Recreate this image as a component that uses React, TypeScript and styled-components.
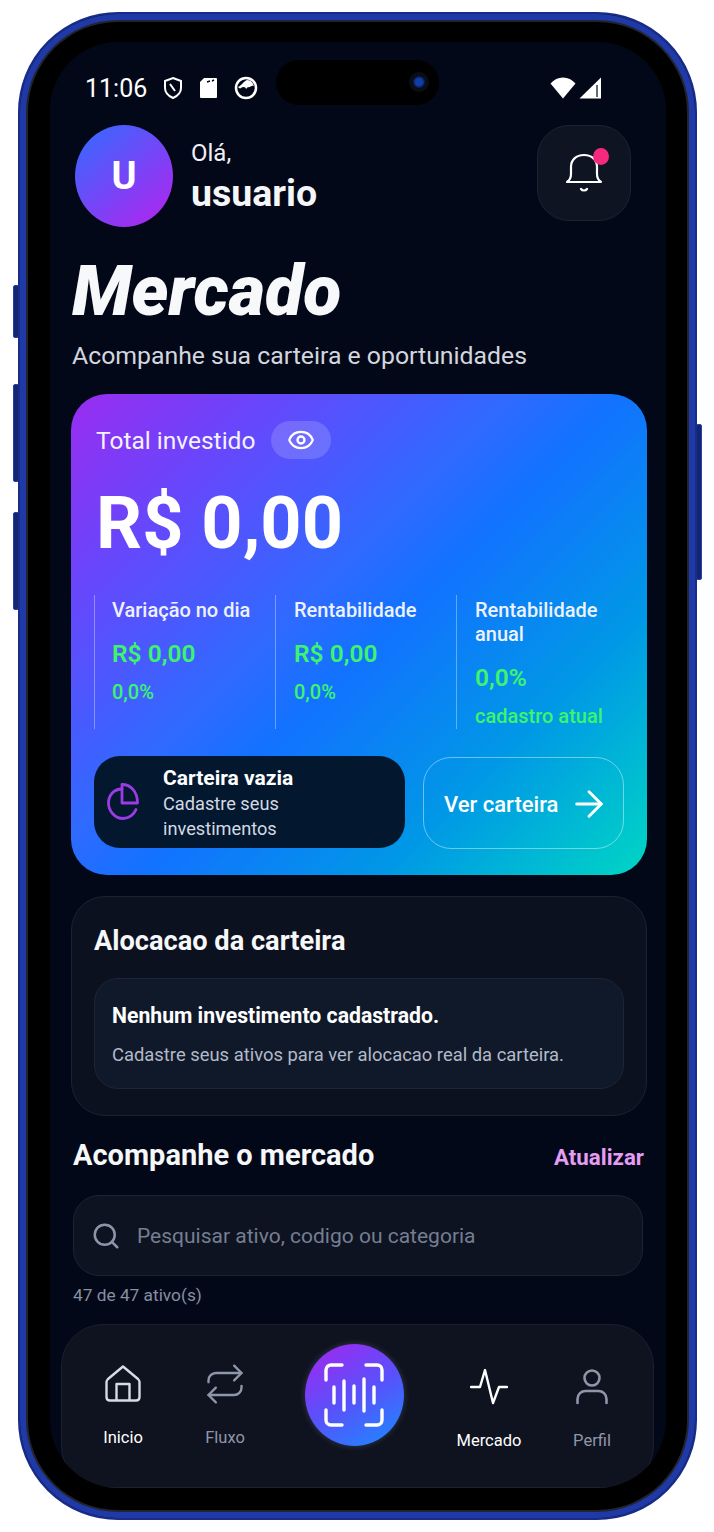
import React from "react";
import styled, { createGlobalStyle } from "styled-components";
import { ArrowRight, Eye, Repeat, Search } from "lucide-react";

const GlobalStyle = createGlobalStyle`
  html, body {
    margin: 0;
    background: #ffffff;
  }
  * {
    box-sizing: border-box;
  }
`;

const App = () => {
  return (
    <Stage>
      <GlobalStyle />
      <SideKey $side="left" $top={285} $height={53} />
      <SideKey $side="left" $top={384} $height={98} />
      <SideKey $side="left" $top={512} $height={98} />
      <SideKey $side="right" $top={424} $height={156} />
      <Frame>
        <Screen>
          <Island>
            <Lens />
          </Island>

          <StatusBar>
            <Time>11:06</Time>
            <StatusIcons>
              <svg width="20" height="24" viewBox="0 0 20 24" fill="none" stroke="#fff" strokeWidth="2">
                <path d="M10 2l8 3v7c0 5-3.500 8-8 10-4.500-2-8-5-8-10V5z" />
                <path d="M7 8l5 7" />
              </svg>
              <svg width="19" height="24" viewBox="0 0 19 24">
                <path d="M5 2h12a1 1 0 0 1 1 1v18a1 1 0 0 1-1 1H2a1 1 0 0 1-1-1V6z" fill="#fff" />
                <path d="M8 6l3-1M13 5l2-1" stroke="#030818" strokeWidth="1.500" />
              </svg>
              <svg width="24" height="24" viewBox="0 0 24 24">
                <circle cx="12" cy="12" r="10" fill="none" stroke="#fff" strokeWidth="2.500" />
                <path d="M4 11c3-1 5-5 9-7 4 0 6 3 7 6-3-1-4 2-6 1l-2 2c0-2-3-3-5-1-1 1-2 0-3-1z" fill="#fff" />
              </svg>
            </StatusIcons>
            <Signal>
              <svg width="26" height="22" viewBox="0 0 26 22">
                <path d="M0.500 6.500C4 2.500 8 0.500 13 0.500s9 2 12.500 6L13 21.500z" fill="#fff" />
              </svg>
              <svg width="23" height="22" viewBox="0 0 23 22">
                <path d="M22 0.500V21.500H0.500z" fill="#fff" />
                <path d="M18 8v12" stroke="#030818" strokeWidth="1.200" />
              </svg>
            </Signal>
          </StatusBar>

          <Header>
            <Avatar>U</Avatar>
            <Greeting>
              <Hello>Olá,</Hello>
              <UserName>usuario</UserName>
            </Greeting>
            <BellButton>
              <svg width="38" height="42" viewBox="0 0 38 42" fill="none" stroke="#fff" strokeWidth="2.200" strokeLinecap="round" strokeLinejoin="round">
                <path d="M2 30c3-2 4-4 4-8v-7C6 8 11 3 19 3s13 5 13 12v7c0 4 1 6 4 8z" />
                <path d="M16 37c1.500 2 4.500 2 6 0" />
              </svg>
              <BellDot />
            </BellButton>
          </Header>

          <PageTitle>Mercado</PageTitle>
          <Subtitle>Acompanhe sua carteira e oportunidades</Subtitle>

          <BalanceCard>
            <BalanceTop>
              <BalanceLabel>Total investido</BalanceLabel>
              <EyePill>
                <Eye size={28} strokeWidth={2} color="#fff" />
              </EyePill>
            </BalanceTop>
            <Amount>R$ 0,00</Amount>

            <Stats>
              <Stat>
                <StatLabel>Variação no dia</StatLabel>
                <StatValue>R$ 0,00</StatValue>
                <StatNote>0,0%</StatNote>
              </Stat>
              <Stat>
                <StatLabel>Rentabilidade</StatLabel>
                <StatValue>R$ 0,00</StatValue>
                <StatNote>0,0%</StatNote>
              </Stat>
              <Stat>
                <StatLabel>Rentabilidade anual</StatLabel>
                <StatValue>0,0%</StatValue>
                <StatNote>cadastro atual</StatNote>
              </Stat>
            </Stats>

            <CardActions>
              <EmptyBox>
                <svg width="32" height="38" viewBox="0 0 32 38" fill="none" stroke="#9a3be6" strokeWidth="2.800" strokeLinejoin="round" strokeLinecap="round">
                  <path d="M15 6C7 6 1.500 12 1.500 20S8 35.500 16 35.500c6 0 11-4 13-9" />
                  <path d="M15 1.500c8.500 0 15.500 7 15.500 18.500H15z" />
                </svg>
                <EmptyText>
                  <EmptyTitle>Carteira vazia</EmptyTitle>
                  <EmptySub>Cadastre seus investimentos</EmptySub>
                </EmptyText>
              </EmptyBox>
              <SeeButton>
                Ver carteira
                <ArrowRight size={42} strokeWidth={1.700} color="#fff" />
              </SeeButton>
            </CardActions>
          </BalanceCard>

          <AllocCard>
            <AllocTitle>Alocacao da carteira</AllocTitle>
            <AllocEmpty>
              <AllocEmptyTitle>Nenhum investimento cadastrado.</AllocEmptyTitle>
              <AllocEmptySub>Cadastre seus ativos para ver alocacao real da carteira.</AllocEmptySub>
            </AllocEmpty>
          </AllocCard>

          <SectionHead>
            <SectionTitle>Acompanhe o mercado</SectionTitle>
            <RefreshLink>Atualizar</RefreshLink>
          </SectionHead>

          <SearchBox>
            <Search size={30} strokeWidth={2} color="#8d95a8" />
            <SearchText>Pesquisar ativo, codigo ou categoria</SearchText>
          </SearchBox>
          <CountText>47 de 47 ativo(s)</CountText>

          <BottomNav>
            <NavItem>
              <NavIcon>
                <svg width="36" height="38" viewBox="0 0 36 38" fill="none" stroke="#d8dbe4" strokeWidth="2.400" strokeLinejoin="round">
                  <path d="M18 1.500L33 14c1 1 1.500 2 1.500 3v15c0 2-1.500 3.500-3.500 3.500H5c-2 0-3.500-1.500-3.500-3.500V17c0-1 .5-2 1.500-3z" />
                  <path d="M11.500 35.500V19h13v16.500" />
                </svg>
              </NavIcon>
              <NavLabel $active>Inicio</NavLabel>
            </NavItem>
            <NavItem>
              <NavIcon>
                <Repeat size={44} strokeWidth={1.300} color="#8f96aa" />
              </NavIcon>
              <NavLabel>Fluxo</NavLabel>
            </NavItem>
            <ScanCell>
              <ScanButton>
                <svg width="60" height="64" viewBox="0 0 60 64" fill="none" stroke="#fff" strokeWidth="3.400" strokeLinecap="round" strokeLinejoin="round">
                  <path d="M18 2H7a5 5 0 0 0-5 5v10" />
                  <path d="M42 2h11a5 5 0 0 1 5 5v10" />
                  <path d="M18 62H7a5 5 0 0 1-5-5V47" />
                  <path d="M42 62h11a5 5 0 0 0 5-5V47" />
                  <path d="M10 24v16M20 18v29M30 23v17M40 16v32M50 24v16" />
                </svg>
              </ScanButton>
            </ScanCell>
            <NavItem $low>
              <NavIcon>
                <svg width="38" height="36" viewBox="0 0 38 36" fill="none" stroke="#fff" strokeWidth="2.400" strokeLinecap="round" strokeLinejoin="round">
                  <path d="M1 18h9l5-17 8 33 6-16h8" />
                </svg>
              </NavIcon>
              <NavLabel $active>Mercado</NavLabel>
            </NavItem>
            <NavItem $low>
              <NavIcon>
                <svg width="32" height="36" viewBox="0 0 32 36" fill="none" stroke="#8f96aa" strokeWidth="2.600" strokeLinecap="round">
                  <circle cx="16" cy="9" r="7.500" />
                  <path d="M1.500 34v-4c0-5 4-8 8-8h13c4 0 8 3 8 8v4" />
                </svg>
              </NavIcon>
              <NavLabel>Perfil</NavLabel>
            </NavItem>
          </BottomNav>
        </Screen>
      </Frame>
    </Stage>
  );
};

const Stage = styled.div`
  position: relative;
  width: 714px;
  height: 1532px;
  padding: 12px 17px 12px 18px;
  font-family: Roboto, "Liberation Sans", sans-serif;
  color: #ffffff;
`;

const SideKey = styled.div<{ $side: "left" | "right"; $top: number; $height: number }>`
  position: absolute;
  top: ${(p) => p.$top}px;
  ${(p) => (p.$side === "left" ? "left: 13px;" : "left: 696px;")}
  width: 6px;
  height: ${(p) => p.$height}px;
  border-radius: 2px;
  background: #14266f;
  border: 1px solid #2340ae;
`;

const Frame = styled.div`
  position: relative;
  height: 1508px;
  padding: 28px 29px 30px 30px;
  border-radius: 100px;
  background: #000000;
  border: 2px solid #182c88;
  box-shadow: inset 0 0 0 6px #1f3aa8, inset 0 0 0 8px #23252e;
`;

const Screen = styled.div`
  position: relative;
  display: flex;
  flex-direction: column;
  height: 1446px;
  padding: 32px 19px 0 22px;
  border-radius: 68px;
  overflow: hidden;
  background: #030818;
`;

const Island = styled.div`
  position: absolute;
  top: 18px;
  left: 226px;
  width: 163px;
  height: 45px;
  border-radius: 23px;
  background: #000000;
`;

const Lens = styled.div`
  position: absolute;
  top: 12px;
  right: 10px;
  width: 20px;
  height: 20px;
  border-radius: 50%;
  background: radial-gradient(circle, #0f3ea8 0 25%, #0a0d18 45%);
`;

const StatusBar = styled.div`
  display: flex;
  align-items: center;
  height: 28px;
  padding: 0 0 0 13px;
`;

const Time = styled.div`
  font-size: 25px;
`;

const StatusIcons = styled.div`
  display: flex;
  align-items: center;
  gap: 16px;
  margin-left: 16px;
`;

const Signal = styled.div`
  display: flex;
  align-items: center;
  gap: 3px;
  margin-left: auto;
  padding-right: 45px;
`;

const Header = styled.div`
  display: flex;
  align-items: flex-start;
  margin-top: 23px;
  padding: 0 16px 0 3px;
`;

const Avatar = styled.div`
  display: flex;
  align-items: center;
  justify-content: center;
  width: 98px;
  height: 102px;
  border-radius: 50%;
  background: linear-gradient(140deg, #3b66ff 8%, #a22df0 85%);
  font-size: 38px;
  font-weight: 700;
`;

const Greeting = styled.div`
  margin: 12px 0 0 18px;
`;

const Hello = styled.div`
  font-size: 24px;
  line-height: 32px;
  color: #eef0f5;
`;

const UserName = styled.div`
  margin-top: 2px;
  font-size: 37.5px;
  line-height: 44px;
  font-weight: 700;
  color: #f5f6f8;
`;

const BellButton = styled.div`
  position: relative;
  display: flex;
  align-items: center;
  justify-content: center;
  width: 94px;
  height: 96px;
  margin-left: auto;
  border-radius: 32px;
  background: #0f1422;
  border: 1px solid #1d2331;
`;

const BellDot = styled.div`
  position: absolute;
  top: 22px;
  right: 21px;
  width: 16px;
  height: 17px;
  border-radius: 50%;
  background: #f52a7e;
`;

const PageTitle = styled.h1`
  margin: 24px 0 0;
  font-size: 70px;
  line-height: 80px;
  font-weight: 900;
  font-style: italic;
  color: #f7f8fa;
`;

const Subtitle = styled.p`
  margin: 9px 0 0;
  font-size: 24.8px;
  line-height: 32px;
  color: #d3d6de;
`;

const BalanceCard = styled.section`
  flex: none;
  height: 481px;
  margin: 22px 0 0 -1px;
  padding: 27px 23px 0;
  border-radius: 36px;
  background: linear-gradient(135deg, #9a2cf0 0%, #6a45fb 18%, #2f6aff 42%, #1272ff 52%, #0098e6 75%, #00d6c4 100%);
`;

const BalanceTop = styled.div`
  display: flex;
  align-items: center;
  gap: 16px;
  padding-left: 2px;
`;

const BalanceLabel = styled.div`
  font-size: 24.5px;
  color: #f4f2ff;
`;

const EyePill = styled.div`
  display: flex;
  align-items: center;
  justify-content: center;
  width: 60px;
  height: 38px;
  border-radius: 19px;
  background: rgba(255, 255, 255, 0.16);
`;

const Amount = styled.div`
  margin-top: 23px;
  padding-left: 2px;
  font-size: 72px;
  line-height: 84px;
  font-weight: 700;
  color: #ffffff;
`;

const Stats = styled.div`
  display: grid;
  grid-template-columns: 181px 181px 168px;
  height: 134px;
  margin-top: 29px;
`;

const Stat = styled.div`
  padding: 3px 0 0 18px;
  border-left: 1px solid rgba(255, 255, 255, 0.35);
  &:first-child {
    padding-left: 17px;
  }
`;

const StatLabel = styled.div`
  font-size: 20px;
  line-height: 24px;
  font-weight: 500;
  color: #eef2ff;
`;

const StatValue = styled.div`
  margin-top: 17px;
  font-size: 24.5px;
  line-height: 30px;
  font-weight: 600;
  color: #3df56a;
`;

const StatNote = styled.div`
  margin-top: 10px;
  font-size: 20px;
  line-height: 26px;
  font-weight: 500;
  color: #3df56a;
`;

const CardActions = styled.div`
  display: flex;
  gap: 18px;
  margin-top: 27px;
`;

const EmptyBox = styled.div`
  display: flex;
  align-items: center;
  gap: 24px;
  width: 311px;
  height: 92px;
  padding-left: 13px;
  border-radius: 26px;
  background: #03182f;
`;

const EmptyText = styled.div`
  width: 170px;
  padding-top: 2px;
`;

const EmptyTitle = styled.div`
  font-size: 21px;
  line-height: 26px;
  font-weight: 700;
`;

const EmptySub = styled.div`
  font-size: 18.2px;
  line-height: 25px;
  color: #d4d9e3;
`;

const SeeButton = styled.div`
  display: flex;
  align-items: center;
  gap: 10px;
  width: 201px;
  height: 92px;
  margin-top: 1px;
  padding: 2px 0 0 20px;
  border-radius: 28px;
  border: 1px solid rgba(255, 255, 255, 0.42);
  font-size: 22px;
  font-weight: 500;
  white-space: nowrap;
`;

const AllocCard = styled.section`
  flex: none;
  height: 220px;
  margin: 21px 0 0 -1px;
  padding: 25px 22px 0;
  border-radius: 34px;
  background: #0c111f;
  border: 1px solid #1c2230;
`;

const AllocTitle = styled.h2`
  margin: 0;
  font-size: 27.2px;
  line-height: 38px;
  font-weight: 700;
  color: #f6f7f9;
`;

const AllocEmpty = styled.div`
  height: 111px;
  margin-top: 18px;
  padding: 23px 17px 0;
  border-radius: 24px;
  background: #101929;
  border: 1px solid #1e2636;
`;

const AllocEmptyTitle = styled.div`
  font-size: 21.2px;
  line-height: 28px;
  font-weight: 700;
`;

const AllocEmptySub = styled.div`
  margin-top: 12px;
  font-size: 18.4px;
  line-height: 26px;
  color: #b3bac9;
  white-space: nowrap;
`;

const SectionHead = styled.div`
  display: flex;
  align-items: center;
  justify-content: space-between;
  margin-top: 21px;
  padding: 0 3px 0 1px;
`;

const SectionTitle = styled.h2`
  margin: 0;
  font-size: 29px;
  line-height: 36px;
  font-weight: 700;
  color: #f6f7f9;
`;

const RefreshLink = styled.div`
  padding-top: 4px;
  font-size: 22.3px;
  font-weight: 700;
  color: #e59cf3;
`;

const SearchBox = styled.div`
  display: flex;
  align-items: center;
  gap: 16px;
  flex: none;
  height: 81px;
  margin: 22px 4px 0 1px;
  padding-left: 17px;
  border-radius: 26px;
  background: #0d1321;
  border: 1px solid #1c2331;
`;

const SearchText = styled.div`
  font-size: 21px;
  color: #767e91;
`;

const CountText = styled.div`
  margin-top: 7px;
  padding-left: 1px;
  font-size: 17.3px;
  line-height: 24px;
  color: #878fa1;
`;

const BottomNav = styled.nav`
  display: grid;
  grid-template-columns: 102px 102px 156px 114px 92px;
  flex: none;
  height: 164px;
  margin: auto -7px 0 -11px;
  padding-left: 10px;
  border-radius: 42px;
  background: #0f1320;
  border: 1px solid #1b2030;
`;

const NavItem = styled.div<{ $low?: boolean }>`
  display: flex;
  flex-direction: column;
  align-items: center;
  padding-top: ${(p) => (p.$low ? 42 : 39)}px;
`;

const NavIcon = styled.div`
  display: flex;
  align-items: center;
  justify-content: center;
  height: 40px;
`;

const NavLabel = styled.div<{ $active?: boolean }>`
  margin-top: 23px;
  font-size: 16.5px;
  line-height: 22px;
  color: ${(p) => (p.$active ? "#ffffff" : "#8f96aa")};
`;

const ScanCell = styled.div`
  display: flex;
  justify-content: center;
  padding-top: 19px;
`;

const ScanButton = styled.div`
  display: flex;
  align-items: center;
  justify-content: center;
  width: 99px;
  height: 102px;
  border-radius: 50%;
  background: linear-gradient(150deg, #9a2cf0 8%, #5a50fb 50%, #1f86ff 95%);
  box-shadow: 0 0 6px rgba(160, 170, 200, 0.25);
`;

export default App;
